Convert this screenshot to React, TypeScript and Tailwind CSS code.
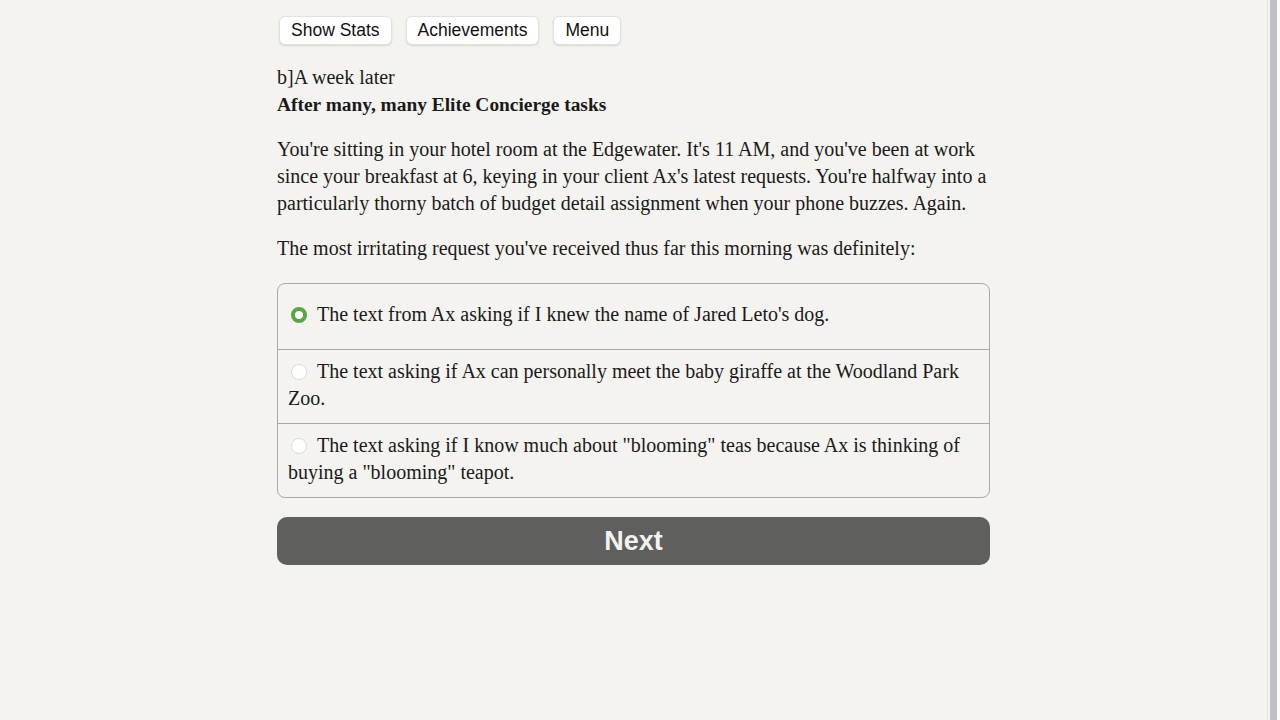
import { useState } from "react";

const options = [
  "The text from Ax asking if I knew the name of Jared Leto's dog.",
  "The text asking if Ax can personally meet the baby giraffe at the Woodland Park Zoo.",
  'The text asking if I know much about "blooming" teas because Ax is thinking of buying a "blooming" teapot.',
];

const serif = "font-['Palatino_Linotype','Liberation_Serif',serif]";
const sans = "font-['Liberation_Sans',Arial,sans-serif]";

const App: React.FC = () => {
  const [choice, setChoice] = useState(0);

  return (
    <div className="h-[720px] bg-[#f4f3ef] flex overflow-hidden">
      <div className="flex-1 flex justify-center">
        <div className={`w-[713px] pt-4 text-[#1a1a1a] ${serif}`}>
          <div className={`flex gap-[14px] pl-[2px] ${sans}`}>
            {["Show Stats", "Achievements", "Menu"].map((label) => (
              <button
                key={label}
                className="h-[29px] px-[11px] bg-white rounded-md border border-[#e2e1dd] shadow-[0_1px_2px_rgba(0,0,0,0.12)] text-[17.5px] text-[#111]"
              >
                {label}
              </button>
            ))}
          </div>

          <div className="mt-[18px] text-[20px] leading-[28px]">b]A week later</div>
          <div className="text-[19.4px] leading-[28px] font-bold">After many, many Elite Concierge tasks</div>

          <p className="mt-[17px] text-[20px] leading-[27px]">
            You're sitting in your hotel room at the Edgewater. It's 11 AM, and you've been at work since your
            breakfast at 6, keying in your client Ax's latest requests. You're halfway into a particularly thorny
            batch of budget detail assignment when your phone buzzes. Again.
          </p>
          <p className="mt-[18px] text-[20px] leading-[27px]">
            The most irritating request you've received thus far this morning was definitely:
          </p>

          <div className="mt-[21px] border border-[#a9a8a5] rounded-lg overflow-hidden">
            {options.map((text, i) => (
              <div
                key={i}
                onClick={() => setChoice(i)}
                className={`px-[10px] text-[20px] leading-[27px] cursor-pointer ${
                  i > 0 ? "border-t border-[#a9a8a5] pt-[8px] pb-[11px]" : "pt-[17px] pb-[21px]"
                }`}
              >
                <span
                  className={`inline-block align-[-2px] w-4 h-4 ml-[3px] mr-[10px] rounded-full ${
                    choice === i
                      ? "bg-[#5ba545] border-[4.5px] border-[#5ba545]"
                      : "bg-white border border-[#dddcd8]"
                  }`}
                >
                  {choice === i && <span className="block w-full h-full rounded-full bg-white" />}
                </span>
                {text}
              </div>
            ))}
          </div>

          <button
            className={`mt-[19px] w-full h-[48px] rounded-[10px] bg-[#5f5f5e] text-[#f4f3ef] text-[27px] font-bold ${sans}`}
          >
            Next
          </button>
        </div>
      </div>
      {/* scrollbar track */}
      <div className="w-[13px] flex">
        <div className="w-[1px] bg-[#e4e3df]" />
        <div className="w-[2px] bg-[#f4f3ef]" />
        <div className="w-[7px] bg-[#c1c0c4]" />
        <div className="flex-1 bg-[#fbfbfb]" />
      </div>
    </div>
  );
};

export default App;
